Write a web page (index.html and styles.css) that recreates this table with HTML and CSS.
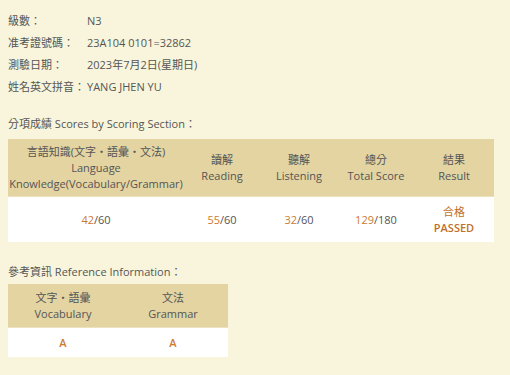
FILE: index.html
```html
<!DOCTYPE html>
<html lang="zh-Hant">
<head>
<meta charset="utf-8">
<link rel="stylesheet" href="styles.css">
</head>
<body>
<div class="page">
  <dl class="info">
    <dt>級數：</dt><dd>N3</dd>
    <dt>准考證號碼：</dt><dd>23A104 0101=32862</dd>
    <dt>測驗日期：</dt><dd>2023年7月2日(星期日)</dd>
    <dt>姓名英文拼音：</dt><dd>YANG JHEN YU</dd>
  </dl>

  <h2 class="section-title">分項成績 Scores by Scoring Section：</h2>
  <table class="scores">
    <colgroup>
      <col class="w176">
      <col class="w76">
      <col class="w78">
      <col class="w76">
      <col class="w80">
    </colgroup>
    <thead>
      <tr>
        <th>言語知識(文字‧語彙‧文法)<br>Language<br>Knowledge(Vocabulary/Grammar)</th>
        <th>讀解<br>Reading</th>
        <th>聽解<br>Listening</th>
        <th>總分<br>Total Score</th>
        <th>結果<br>Result</th>
      </tr>
    </thead>
    <tbody>
      <tr>
        <td><span class="hl">42</span>/60</td>
        <td><span class="hl">55</span>/60</td>
        <td><span class="hl">32</span>/60</td>
        <td><span class="hl">129</span>/180</td>
        <td class="result"><span class="result-zh">合格</span><br>PASSED</td>
      </tr>
    </tbody>
  </table>

  <h2 class="section-title second">參考資訊 Reference Information：</h2>
  <table class="ref">
    <colgroup>
      <col class="w110">
      <col class="w110">
    </colgroup>
    <thead>
      <tr>
        <th>文字‧語彙<br>Vocabulary</th>
        <th>文法<br>Grammar</th>
      </tr>
    </thead>
    <tbody>
      <tr>
        <td class="grade">A</td>
        <td class="grade">A</td>
      </tr>
    </tbody>
  </table>
</div>
</body>
</html>
```

FILE: styles.css
```css
html, body {
  margin: 0;
  padding: 0;
  background: #f8f5dc;
}
body {
  font-family: "Open Sans", "Noto Sans CJK TC", sans-serif;
  font-size: 11px;
  color: #555555;
}
.page {
  padding: 10px 8px 0 8px;
}
.info {
  display: grid;
  grid-template-columns: 79px auto;
  margin: 0;
}
.info dt, .info dd {
  margin: 0;
  height: 22px;
  line-height: 22px;
}
.section-title {
  font-size: 11px;
  font-weight: normal;
  margin: 15px 0 0 0;
  height: 22px;
  line-height: 22px;
}
.section-title.second {
  margin-top: 19px;
}
table {
  border-collapse: collapse;
  table-layout: fixed;
  margin-top: 4px;
}
.w176 { width: 176px; }
.w76 { width: 76px; }
.w78 { width: 78px; }
.w80 { width: 80px; }
.w110 { width: 110px; }
th {
  background: #e3d4a2;
  font-weight: normal;
  line-height: 16px;
  color: #555555;
  border-bottom: 1px solid #ece2bf;
  padding: 0;
}
td {
  background: #ffffff;
  text-align: center;
  color: #555555;
  padding: 0;
}
.scores {
  width: 486px;
}
.scores th {
  height: 57px;
}
.scores td {
  height: 45px;
  line-height: 16px;
}
.hl {
  color: #cc7a32;
}
.result {
  color: #c0702a;
  font-weight: 600;
}
.result-zh {
  font-weight: normal;
}
.ref {
  width: 220px;
  margin-top: 1px;
}
.ref th {
  height: 43px;
}
.ref td {
  height: 29px;
}
.grade {
  color: #cc7a32;
  font-weight: 600;
}
```
